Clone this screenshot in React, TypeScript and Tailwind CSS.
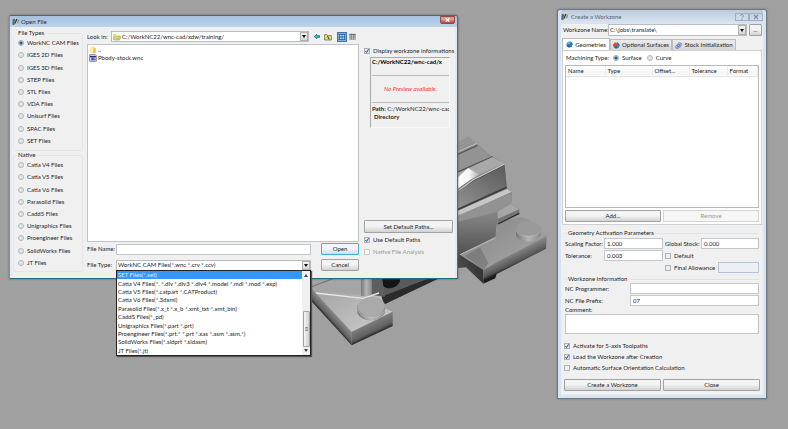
import { type ReactNode } from "react";

const fileTypes = ["WorkNC CAM Files", "IGES 2D Files", "IGES 3D Files", "STEP Files", "STL Files", "VDA Files", "Unisurf Files", "SPAC Files", "SET Files"];
const nativeTypes = ["Catia V4 Files", "Catia V5 Files", "Catia V6 Files", "Parasolid Files", "Cadd5 Files", "Unigraphics Files", "Proengineer Files", "SolidWorks Files", "JT Files"];
const typeOptions = [
  "SET Files(*.set)",
  "Catia V4 Files(*. *.dlv *.dlv3 *.dlv4 *.model *.mdl *.mod *.exp)",
  "Catia V5 Files(*.catpart *.CATProduct)",
  "Catia V6 Files(*.3dxml)",
  "Parasolid Files(*.x_t *.x_b *.xmt_txt *.xmt_bin)",
  "CaddS Files(*_pd)",
  "Unigraphics Files(*.part *.prt)",
  "Proengineer Files(*.prt.* *.prt *.xas *.asm *.asm.*)",
  "SolidWorks Files(*.sldprt *.sldasm)",
  "JT Files(*.jt)",
];

const buttonLook = "rounded-[1px] border border-[#a2a2a2] bg-linear-to-b from-[#f4f4f4] from-45% to-[#d2d2d2] text-center";
const fieldLook = "h-[11px] min-w-0 border border-[#c3c7cb] bg-white px-[2px]";

function Radio({ name, label, checked }: { name: string; label: string; checked?: boolean }) {
  return (
    <label className="flex items-center gap-[3px] whitespace-nowrap">
      <input
        type="radio"
        name={name}
        defaultChecked={checked}
        className="size-[6px] shrink-0 appearance-none rounded-full border border-[#b4b6b8] bg-[#e4e5e6] checked:border-[#a3adb5] checked:bg-[radial-gradient(circle,#1f5f8c_35%,#c5d4df_70%)]"
      />
      {label}
    </label>
  );
}

function Check({ label, checked, disabled }: { label: string; checked?: boolean; disabled?: boolean }) {
  return (
    <label className={"flex items-center gap-[3px] whitespace-nowrap " + (disabled ? "text-[#9a9a9a]" : "")}>
      <span className="grid shrink-0">
        <input
          type="checkbox"
          defaultChecked={checked}
          disabled={disabled}
          className="peer size-[6px] appearance-none border border-[#aeb2b6] bg-[#eceeef] [grid-area:1/1] checked:bg-[#d9e2ee] disabled:border-[#cccccc] disabled:bg-[#f8f8f8]"
        />
        <svg viewBox="0 0 6 6" className="invisible size-[6px] [grid-area:1/1] pointer-events-none peer-checked:visible">
          <path d="M1.4 3 L2.6 4.5 L4.6 1.3" fill="none" stroke="#33508f" strokeWidth="1" />
        </svg>
      </span>
      {label}
    </label>
  );
}

function DropArrow() {
  return (
    <span className="pointer-events-none grid w-2 shrink-0 place-items-center border border-[#b0b0b0] bg-linear-to-b from-[#f4f4f4] to-[#d6d6d6]">
      <svg viewBox="0 0 4 3" className="h-[3px] w-1">
        <path d="M0 0H4L2 3Z" fill="#111" />
      </svg>
    </span>
  );
}

function Combo({ id, value, className, icon }: { id: string; value: string; className: string; icon?: ReactNode }) {
  return (
    <div className={"flex border border-[#b9bdc1] bg-white " + className}>
      {icon}
      <select id={id} className="min-w-0 flex-1 appearance-none bg-white px-px outline-none">
        <option>{value}</option>
      </select>
      <DropArrow />
    </div>
  );
}

function AppIcon() {
  return (
    <svg viewBox="0 0 24 24" className="size-2 shrink-0">
      <path d="M2 4 8 2 10 14 5 21 1 20Z" fill="#47698c" />
      <path d="M10 3 19 1 18 10 12 20 6 22Z" fill="#e1d28d" />
      <path d="M12 3 17 3 10 17 6 20Z" fill="#30373d" />
      <path d="M17 7 22 4 20 13 14 18Z" fill="#6d9cc9" />
    </svg>
  );
}

function FolderIcon() {
  return (
    <svg viewBox="0 0 24 24" className="ml-px size-2 shrink-0 self-center">
      <path d="M1 4H9L11 7H20V19H1Z" fill="#d8bf43" />
      <path d="M3 7H17V14H3Z" fill="#fff6b0" />
      <path d="M4 11H23L20 21H2Z" fill="#f1df6b" stroke="#8d8e3a" strokeWidth="1.5" />
      <path d="M9 14H20V20H8Z" fill="#a9cc7e" />
    </svg>
  );
}

function OpenFileWindow() {
  return (
    <section aria-label="Open File" className="absolute top-[15px] left-[9px] w-[449px] rounded-t-[3px] border border-t-[#59636d] border-r-[#1f7f97] border-b-[#1b6c80] border-l-[#8494a5] bg-[#f0f0f0] shadow-[0_0_2px_#555]">
      <header className="flex h-[11px] items-center rounded-t-[2px] bg-linear-to-b from-[#a5c0dd] to-[#bdd3ec] pr-[2px] pl-[2px]">
        <AppIcon />
        <h1 className="ml-px flex-1 text-[#1d2a3a]">Open File</h1>
        <button aria-label="Close" className="grid h-2 w-[15px] place-items-center self-start rounded-b-[2px] border border-[#8f4a44] bg-linear-to-b from-[#dc9a8c] from-45% to-[#bd3b26]">
          <svg viewBox="0 0 5 4" className="h-1 w-[5px]">
            <path d="M.7.3 4.3 3.7M4.3.3.7 3.7" stroke="#fff" strokeWidth="1.2" />
          </svg>
        </button>
      </header>
      <div className="flex border-x-2 border-[#e3eaf2] pb-[6px]">
        <div className="ml-px w-[70px] pt-[2px]">
          <fieldset className="rounded-[2px] border border-[#e3e5e6] pb-[3px] pl-1">
            <legend className="-ml-px h-2 px-px">File Types</legend>
            <div className="grid h-[110px] grid-rows-9">
              {fileTypes.map((t, i) => <Radio key={t} name="format" label={t} checked={i === 0} />)}
            </div>
          </fieldset>
          <fieldset className="rounded-[2px] border border-[#e3e5e6] pb-[2px] pl-1">
            <legend className="-ml-px h-2 px-px">Native</legend>
            <div className="grid h-[110px] grid-rows-9">
              {nativeTypes.map((t) => <Radio key={t} name="format" label={t} />)}
            </div>
          </fieldset>
        </div>

        <div className="ml-1 flex w-[272px] flex-col pt-1">
          <div className="flex items-center">
            <label htmlFor="look" className="w-6">Look in:</label>
            <Combo id="look" value="C:/WorkNC22/wnc-cad/xdw/training/" className="h-[11px] w-[198px]" icon={<FolderIcon />} />
            <button aria-label="Back" className="ml-[5px]">
              <svg viewBox="0 0 18 15" className="h-[5px] w-[6px]">
                <path d="M1 7.500 8 1V5H17V10H8V14Z" fill="#1ee0e6" stroke="#074b55" strokeWidth="2" />
              </svg>
            </button>
            <button aria-label="Parent folder" className="ml-1">
              <svg viewBox="0 0 24 24" className="size-[8px]">
                <path d="M2 5H9L11 8H22V21H2Z" fill="#f1ec83" stroke="#494813" strokeWidth="2" />
                <path d="M8 13 11 10 14 13H12V17H17" fill="none" stroke="#111" strokeWidth="2" />
              </svg>
            </button>
            <button aria-label="List view" className="ml-[5px] grid size-[10px] place-items-center border border-[#3b79b5] bg-[#8bbbe7]">
              <svg viewBox="0 0 24 24" className="size-2">
                <path d="M1 4H23M1 12H23M1 20H23M5 3V21M12 3V21M19 3V21" stroke="#1b4286" strokeWidth="2" />
                <path d="M7 6h3v4H7zm7 0h3v4h-3zm-7 8h3v4H7zm7 0h3v4h-3z" fill="#e5f3ff" />
              </svg>
            </button>
            <button aria-label="Detail view" className="ml-[2px]">
              <svg viewBox="0 0 21 21" className="size-[7px]">
                <path d="M1 4H20M1 9H20M1 14H20M1 19H20" stroke="#aaa" strokeWidth="2" />
                <path d="M3 3V20M8 3V20M13 3V20M18 3V20M1 4H20" stroke="#54545e" strokeWidth="2" />
              </svg>
            </button>
          </div>
          <ul className="mt-[2px] h-[198px] border border-[#c0c3c8] bg-white pt-px pl-px">
            <li className="flex items-center">
              <svg viewBox="0 0 24 24" className="mr-px size-2">
                <path d="M4 2H15L19 5V22H4Z" fill="#f4df83" />
                <path d="M4 4 12 1 13 21 5 23Z" fill="#ffefa8" />
                <path d="M15 6H20V22H12Z" fill="#dfc051" />
              </svg>
              ..
            </li>
            <li className="flex items-center">
              <svg viewBox="0 0 24 24" className="mr-px size-2">
                <path d="M2 2H19L22 5V22H2Z" fill="#d5d9e8" stroke="#53566c" strokeWidth="2" />
                <path d="M3 6H21V10H3Z" fill="#1a2c9b" />
                <path d="M7 11H16V19H7Z" fill="#3551c9" />
                <path d="M12 14H20V18H12Z" fill="#d8563e" />
              </svg>
              Pbody-stock.wnc
            </li>
          </ul>
          <div className="mt-px flex items-center">
            <label htmlFor="fname" className="w-[29px] whitespace-nowrap">File Name:</label>
            <input id="fname" className={fieldLook + " w-[195px]"} />
            <button className="ml-auto h-3 w-[38px] rounded-[1px] border border-[#3fb2dc] bg-linear-to-b from-[#f2f6f8] from-45% to-[#cddfe8]">Open</button>
          </div>
          <div className="relative mt-1 flex items-center">
            <label htmlFor="ftype" className="w-[29px] whitespace-nowrap">File Type:</label>
            <Combo id="ftype" value="WorkNC CAM Files(*.wnc *.crv *.ccv)" className="h-[11px] w-[195px]" />
            <button className={buttonLook + " ml-auto h-3 w-[38px]"}>Cancel</button>
            <div className="absolute top-[11px] left-[29px] z-10 flex w-[195px] border border-[#222] bg-white shadow-[1px_1px_1px_#555]">
              <ul role="listbox" aria-label="File Type" className="grid h-[84px] flex-1 grid-rows-10">
                {typeOptions.map((t, i) => (
                  <li key={t} role="option" aria-selected={i === 0} className="flex items-center pl-px whitespace-nowrap aria-selected:bg-[#3399ff] aria-selected:text-[#dcecff]">
                    {t}
                  </li>
                ))}
              </ul>
              <div className="flex w-2 flex-col items-center bg-[#f0f0f0] py-[3px]">
                <svg viewBox="0 0 4 3" className="h-[3px] w-1"><path d="M0 3H4L2 0Z" fill="#444" /></svg>
                <div className="mt-auto mb-[2px] grid h-9 w-[7px] place-items-center rounded-[1px] border border-[#a5a5a5] bg-linear-to-r from-[#f6f6f6] to-[#cfcfcf]">
                  <svg viewBox="0 0 3 4" className="h-1 w-[3px]"><path d="M0 .5H3M0 2H3M0 3.500H3" stroke="#777" strokeWidth=".7" /></svg>
                </div>
                <svg viewBox="0 0 4 3" className="h-[3px] w-1"><path d="M0 0H4L2 3Z" fill="#444" /></svg>
              </div>
            </div>
          </div>
        </div>

        <div className="ml-[5px] flex w-[89px] flex-col pt-5">
          <Check label="Display workzone informations" checked />
          <div className="mt-[2px] ml-[6px] w-[80px] overflow-hidden border border-t-[#aaa] border-r-[#fafafa] border-b-[#fafafa] border-l-[#aaa] pl-px whitespace-nowrap">
            <p className="h-[18px] border-b border-[#bbb] font-bold text-black">C:/WorkNC22/wnc-cad/x</p>
            <p className="grid h-[27px] place-items-center border-b border-[#bbb] text-[#f33] italic">No Preview available.</p>
            <div className="h-6 pt-[2px]">
              <p><b>Path:</b> C:/WorkNC22/wnc-cad</p>
              <p className="pl-[2px] font-bold">Directory</p>
            </div>
          </div>
          <button className={buttonLook + " mt-auto h-[13px]"}>Set Default Paths...</button>
          <div className="mt-[3px] mb-4 grid gap-1">
            <Check label="Use Default Paths" checked />
            <Check label="Native File Analysis" disabled />
          </div>
        </div>
      </div>
    </section>
  );
}

function GemIcon({ warm }: { warm?: boolean }) {
  return (
    <svg viewBox="0 0 24 24" className="size-[7px] shrink-0">
      <path d="M7 3 17 2 23 10 19 20 10 23 2 17 2 9Z" fill="#1667b5" />
      <path d="M7 3 17 2 14 11 3 12Z" fill={warm ? "#f26a2a" : "#5db2ec"} />
      <path d="M14 11 23 10 19 20 11 19Z" fill="#2c86d6" />
      {warm && <path d="M4 2H9V7H14V12H9V17H4V12H0V7H4Z" fill="#ea4420" />}
    </svg>
  );
}

function StockIcon() {
  return (
    <svg viewBox="0 0 24 24" className="size-[7px] shrink-0">
      <path d="M2 15 13 2 22 5 21 14 10 22 3 21Z" fill="#b9cdea" stroke="#3a66ab" strokeWidth="2" />
      <path d="M6 17C12 18 17 14 17 7M7 12C10 13 13 10 13 7" fill="none" stroke="#2551a0" strokeWidth="2.500" />
    </svg>
  );
}

function WorkzoneWindow() {
  const tab = "flex items-center justify-center gap-[2px] border border-b-0 border-[#bdbdbd] whitespace-nowrap";
  const caption = "grid h-2 w-[14px] place-items-center border border-[#9fb0c2] text-[#667]";
  return (
    <section aria-label="Create a Workzone" className="absolute top-[9px] left-[557px] w-[210px] rounded-t-[3px] border border-[#6f7780] bg-[#d7e4f2] px-[3px] pb-[3px] shadow-[0_0_2px_#666]">
      <header className="flex h-[14px] items-center bg-linear-to-b from-[#bccbdc] to-[#dbe6f3]">
        <AppIcon />
        <h1 className="ml-[2px] flex-1 text-[#566270]">Create a Workzone</h1>
        <button aria-label="Help" className={caption}>
          <svg viewBox="0 0 6 6" className="size-[6px]"><path d="M1.500 2C1.500 0 4.500 0 4.500 2 4.500 3 3 3 3 4M3 5V6" fill="none" stroke="#889" /></svg>
        </button>
        <button aria-label="Close" className={caption}>
          <svg viewBox="0 0 6 6" className="size-[6px]"><path d="M1 1 5 5M5 1 1 5" stroke="#889" strokeWidth="1.200" /></svg>
        </button>
      </header>
      <div className="bg-[#f0f0f0] px-px">
        <div className="flex items-center pl-px">
          <label htmlFor="wname" className="w-[45px] whitespace-nowrap">Workzone Name:</label>
          <Combo id="wname" value="C:\jobs\translate\" className="h-3 flex-1" />
          <button className={buttonLook + " ml-[2px] h-3 w-[13px]"}>...</button>
        </div>
        <div role="tablist" className="mt-[2px] flex h-3 items-end">
          <button role="tab" aria-selected="true" className={tab + " h-3 w-[48px] bg-white"}><GemIcon />Geometries</button>
          <button role="tab" aria-selected="false" className={tab + " h-[11px] w-[62px] bg-linear-to-b from-[#ececec] to-[#d6d6d6]"}><GemIcon warm />Optional Surfaces</button>
          <button role="tab" aria-selected="false" className={tab + " h-[11px] w-[64px] bg-linear-to-b from-[#ececec] to-[#d6d6d6]"}><StockIcon />Stock Initialization</button>
        </div>
        <div className="border border-[#d0d0d0] bg-white px-[2px] pt-[3px] pb-[2px]">
          <div className="flex items-center gap-[3px] pl-px">
            <span className="w-11 whitespace-nowrap">Machining Type:</span>
            <Radio name="machining" label="Surface" checked />
            <span className="ml-[2px]"><Radio name="machining" label="Curve" /></span>
          </div>
          <div className="mt-[3px] h-[143px] border border-[#b6bac0]">
            <table className="w-full table-fixed text-left">
              <colgroup><col className="w-[39px]" /><col className="w-[47px]" /><col className="w-[37px]" /><col className="w-[38px]" /><col /></colgroup>
              <thead className="border-b border-[#e2e2e2] bg-linear-to-b from-white to-[#f4f4f4]">
                <tr>
                  {["Name", "Type", "Offset...", "Tolerance", "Format"].map((h) => (
                    <th key={h} className="h-[10px] border-r border-[#ececec] pl-[2px] font-normal">{h}</th>
                  ))}
                </tr>
              </thead>
            </table>
          </div>
          <div className="mt-[2px] grid grid-cols-2 gap-[2px]">
            <button className={buttonLook + " h-3"}>Add...</button>
            <button disabled className="h-3 border border-[#d4d4d4] bg-[#f6f6f6] text-[#9a9a9a]">Remove</button>
          </div>
        </div>

        <div className="px-[3px]">
          <fieldset className="mt-1 border-t border-[#dfe3e6] py-px">
            <legend className="ml-[2px] h-2 px-px">Geometry Activation Parameters</legend>
            <div className="grid grid-cols-[39px_59px_minmax(0,1fr)] items-center gap-y-px">
              <label htmlFor="scale" className="whitespace-nowrap">Scaling Factor:</label>
              <input id="scale" defaultValue="1.000" className={fieldLook + " w-full"} />
              <div className="flex items-center pl-[2px]">
                <label htmlFor="stock" className="w-9 shrink-0 whitespace-nowrap">Global Stock:</label>
                <input id="stock" defaultValue="0.000" className={fieldLook + " w-full"} />
              </div>
              <label htmlFor="tol">Tolerance:</label>
              <input id="tol" defaultValue="0.003" className={fieldLook + " w-full"} />
              <div className="pl-[2px]"><Check label="Default" /></div>
              <div className="col-start-3 flex items-center justify-between pl-[2px]">
                <Check label="Final Allowance" />
                <input aria-label="Final Allowance value" disabled className="h-[11px] w-[41px] min-w-0 border border-[#b4c4da] bg-[#eceff4]" />
              </div>
            </div>
          </fieldset>
          <fieldset className="mt-px border-t border-[#dfe3e6]">
            <legend className="ml-[2px] h-2 px-px">Workzone Information</legend>
            <div className="grid grid-cols-[65px_minmax(0,1fr)] items-center gap-y-px">
              <label htmlFor="prog">NC Programmer:</label>
              <input id="prog" className={fieldLook + " w-full"} />
              <label htmlFor="prefix">NC File Prefix:</label>
              <input id="prefix" defaultValue="07" className={fieldLook + " w-full"} />
            </div>
            <label htmlFor="comment" className="block">Comment:</label>
            <textarea id="comment" className="block h-5 w-full resize-none border border-[#c3c7cb] bg-white" />
          </fieldset>
        </div>
        <div className="mt-2 grid gap-[3px] pl-[2px]">
          <Check label="Activate for 5-axis Toolpaths" checked />
          <Check label="Load the Workzone after Creation" checked />
          <Check label="Automatic Surface Orientation Calculation" />
        </div>
        <div className="mt-[7px] grid grid-cols-2 gap-[2px] px-[2px] pb-1">
          <button className={buttonLook + " h-3"}>Create a Workzone</button>
          <button className={buttonLook + " h-3"}>Close</button>
        </div>
      </div>
    </section>
  );
}

function MachinedPart() {
  return (
    <svg viewBox="0 0 870 720" className="absolute top-[130px] left-[270px] h-[240px] w-[290px]" aria-label="Machined part">
      <defs>
        <linearGradient id="body" x1="0" y1="0" x2="0" y2="1"><stop offset="0" stopColor="#8d8d8d" /><stop offset="1" stopColor="#4c4c4c" /></linearGradient>
        <linearGradient id="face" x1="0" y1="1" x2="1" y2="0"><stop offset="0" stopColor="#979797" /><stop offset="1" stopColor="#5a5a5a" /></linearGradient>
        <linearGradient id="wall" x1="0" y1="0" x2="0" y2="1"><stop offset="0" stopColor="#888" /><stop offset="1" stopColor="#505050" /></linearGradient>
        <linearGradient id="plate" x1="0" y1="0" x2="1" y2="1"><stop offset="0" stopColor="#858585" /><stop offset="1" stopColor="#a8a8a8" /></linearGradient>
        <linearGradient id="foot" x1="0" y1="0" x2="1" y2="1"><stop offset="0" stopColor="#9a9a9a" /><stop offset="1" stopColor="#cdcdcd" /></linearGradient>
        <linearGradient id="edgeR" gradientUnits="userSpaceOnUse" x1="755" y1="357" x2="771" y2="391"><stop offset="0" stopColor="#858585" /><stop offset=".75" stopColor="#565656" /><stop offset="1" stopColor="#1c1c1c" /></linearGradient>
        <linearGradient id="edgeF" gradientUnits="userSpaceOnUse" x1="306" y1="575" x2="323" y2="611"><stop offset="0" stopColor="#7d7d7d" /><stop offset=".7" stopColor="#606060" /><stop offset="1" stopColor="#1c1c1c" /></linearGradient>
        <linearGradient id="edgeL" gradientUnits="userSpaceOnUse" x1="178" y1="533" x2="158" y2="551"><stop offset="0" stopColor="#8a8a8a" /><stop offset=".7" stopColor="#616161" /><stop offset="1" stopColor="#222" /></linearGradient>
        <linearGradient id="boss" x1="0" y1="0" x2="1" y2="0"><stop offset="0" stopColor="#777" /><stop offset=".5" stopColor="#b5b5b5" /><stop offset="1" stopColor="#8c8c8c" /></linearGradient>
        <linearGradient id="glint" x1="0" y1="0" x2="1" y2="0"><stop offset="0" stopColor="#fff" /><stop offset=".6" stopColor="#f4f4f4" /><stop offset="1" stopColor="#b0b0b0" /></linearGradient>
        <linearGradient id="dark" x1="0" y1="0" x2="1" y2="0"><stop offset="0" stopColor="#4a4a4a" /><stop offset="1" stopColor="#353535" /></linearGradient>
      </defs>
      <path d="M540 50 595 18 622 42 666 80 704 100 710 172 725 186 724 218 682 246 676 330 570 378 540 415Z" fill="url(#body)" />
      <path d="M540 48 595 18 618 38 540 72Z" fill="#999" />
      <path d="M545 52 600 24M550 58 606 30M550 66 612 36" stroke="#888" strokeWidth="2" />
      <path d="M540 78 620 42 666 80 540 140Z" fill="#939393" />
      <path d="M540 76 620 40" stroke="#c5c5c5" strokeWidth="3" fill="none" />
      <path d="M540 84 622 46M540 136 668 80" stroke="#555" strokeWidth="4" fill="none" />
      <path d="M540 140 666 82 704 100 612 142 540 190Z" fill="#a9a9a9" />
      <path d="M555 150 594 114 628 134 600 150 555 182Z" fill="url(#glint)" />
      <path d="M560 186 612 148 704 102" stroke="#c9c9c9" strokeWidth="4" fill="none" />
      <path d="M560 192 612 152 704 106" stroke="#4f4f4f" strokeWidth="3" fill="none" />
      <path d="M540 198 612 154 704 108 710 170 560 242Z" fill="url(#face)" />
      <path d="M560 244 712 176 725 186 560 262Z" fill="#c6c6c6" />
      <path d="M560 240 710 172" stroke="#3c3c3c" strokeWidth="5" />
      <path d="M560 258 725 188 724 218 682 246 560 282Z" fill="#929292" />
      <path d="M560 276 682 246 676 325 560 375Z" fill="url(#wall)" />
      <path d="M676 320 682 280 750 260 780 270 830 318 680 400 640 420 585 384 568 374Z" fill="url(#plate)" />
      <path d="M682 245 722 221 748 238 748 250 682 282Z" fill="#747474" />
      <path d="M682 245 722 221 748 238 684 266Z" fill="#a6a6a6" />
      <path d="M684 282 748 250" stroke="#2c2c2c" strokeWidth="4" />
      <path d="M676 324 570 374" stroke="#bbb" strokeWidth="3" />
      <path d="M585 378 630 352 655 400 640 420Z" fill="#666" opacity=".5" />
      <path d="M560 372 570 374 640 420 640 461 588 412 560 415Z" fill="url(#dark)" />
      <path d="M640 420 682 396 830 318 828 356 680 432 676 445 640 461Z" fill="url(#edgeR)" />
      <path d="M738 294V318C750 342 800 340 812 316V294Z" fill="url(#boss)" />
      <ellipse cx="775" cy="295" rx="37" ry="22" fill="#9a9a9a" />
      <path d="M738 300C748 326 800 326 811 302" fill="none" stroke="#bbb" strokeWidth="2" />
      <path d="M300 435H520L345 522 300 500Z" fill="#5a5a5a" />
      <path d="M330 502 505 434V446L345 522Z" fill="#2b2b2b" />
      <ellipse cx="362" cy="452" rx="29" ry="22" fill="#151515" transform="rotate(-18 362 452)" />
      <path d="M424 446 436 440" stroke="#aaa" strokeWidth="4" />
      <path d="M110 435H335V500L345 535 368 545 245 606 110 465Z" fill="url(#foot)" />
      <path d="M110 435H275V495L130 482Z" fill="#a5a5a5" />
      <path d="M125 470 205 440" stroke="#7c7c7c" strokeWidth="4" />
      <path d="M273 435H305V498H273Z" fill="url(#boss)" />
      <path d="M305 435H335L345 500 305 495Z" fill="#5e5e5e" />
      <path d="M136 489 280 505 327 489" fill="none" stroke="#e6e6e6" strokeWidth="4" />
      <path d="M110 460 245 606V646L110 498Z" fill="url(#edgeL)" />
      <path d="M245 606 368 545V588L245 646Z" fill="url(#edgeF)" />
      <path d="M262 525V548C275 580 330 578 345 548V525Z" fill="url(#boss)" />
      <path d="M262 530C270 495 335 490 345 526 340 572 270 568 262 530Z" fill="#aaa" />
      <path d="M262 538C275 572 330 572 345 540" fill="none" stroke="#c6c6c6" strokeWidth="2" />
    </svg>
  );
}

export default function App() {
  return (
    <main className="relative h-screen min-h-[429px] overflow-hidden bg-[#a0a0a0] font-[Lato,'Open_Sans',sans-serif] text-[6px] leading-[8px] text-[#1c1c1c]">
      <MachinedPart />
      <OpenFileWindow />
      <WorkzoneWindow />
    </main>
  );
}
